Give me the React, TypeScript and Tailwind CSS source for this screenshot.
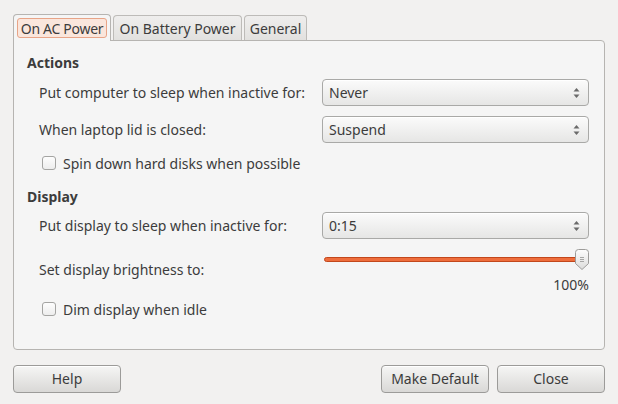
import { ReactNode } from "react";

const font = { fontFamily: '"Noto Sans", "Open Sans", sans-serif' };

function Combo({ value }: { value: string }) {
  return (
    <div className="flex h-[27px] w-[267px] items-center justify-between rounded-[4px] border border-[#a9a9a7] bg-gradient-to-b from-[#fbfbfb] to-[#e6e6e5] pl-[6px] pr-[8px] shadow-[inset_0_1px_0_#ffffff]">
      <span>{value}</span>
      <svg width="7" height="12" viewBox="0 0 7 12" className="text-[#6a6a6a]">
        <path d="M3.5 1 L6.5 4.5 L0.5 4.5 Z" fill="currentColor" />
        <path d="M3.5 11 L6.5 7.5 L0.5 7.5 Z" fill="currentColor" />
      </svg>
    </div>
  );
}

function Check({ label }: { label: string }) {
  return (
    <div className="flex h-[20px] items-center gap-[7px] pl-[3px]">
      <div className="h-[14px] w-[14px] rounded-[3px] border border-[#a4a4a2] bg-gradient-to-b from-[#fdfdfd] to-[#ededed]" />
      <span>{label}</span>
    </div>
  );
}

function Row({ label, children }: { label: string; children: ReactNode }) {
  return (
    <div className="grid grid-cols-[283px_267px] items-center">
      <span>{label}</span>
      {children}
    </div>
  );
}

function Button({ label, className = "" }: { label: string; className?: string }) {
  return (
    <button
      className={`flex h-[28px] w-[108px] items-center justify-center rounded-[4px] border border-[#9c9b99] bg-gradient-to-b from-[#f6f6f5] to-[#d9d8d6] pb-[2px] text-[#3c3c3c] shadow-[inset_0_1px_0_#ffffff] ${className}`}
    >
      {label}
    </button>
  );
}

export default function App() {
  return (
    <div
      style={font}
      className="flex h-[404px] w-[618px] flex-col bg-[#f2f1f0] px-[13px] pt-[14px] text-[14px] text-[#3c3c3c]"
    >
      {/* Tabs */}
      <div className="flex items-end gap-[2px]">
        <div className="relative z-10 -mb-px flex h-[27px] w-[98px] items-start rounded-t-[4px] border border-b-0 border-[#b6b4b1] bg-[#f5f5f5] px-[3px] pt-[3px]">
          <div className="flex h-[20px] w-full items-center justify-center rounded-[3px] border border-[#e8a487] bg-[#fae6dc] tracking-[-0.3px]">
            On AC Power
          </div>
        </div>
        <div className="flex h-[25px] w-[129px] items-center justify-center rounded-t-[4px] border border-b-0 border-[#bdbbb8] bg-gradient-to-b from-[#efeeed] to-[#e2e1df]">
          On Battery Power
        </div>
        <div className="flex h-[25px] w-[63px] items-center justify-center rounded-t-[4px] border border-b-0 border-[#bdbbb8] bg-gradient-to-b from-[#efeeed] to-[#e2e1df]">
          General
        </div>
      </div>

      {/* Panel */}
      <div className="flex h-[310px] flex-col rounded-b-[4px] rounded-tr-[4px] border border-[#b6b4b1] bg-[#f5f5f5] pl-[13px] pt-[11px]">
        <div className="flex h-[20px] items-center font-bold">Actions</div>
        <div className="mt-[7px] flex flex-col gap-[10px] pl-[12px]">
          <Row label="Put computer to sleep when inactive for:">
            <Combo value="Never" />
          </Row>
          <Row label="When laptop lid is closed:">
            <Combo value="Suspend" />
          </Row>
          <Check label="Spin down hard disks when possible" />
        </div>
        <div className="mt-[13px] flex h-[20px] items-center font-bold">Display</div>
        <div className="mt-[6px] flex flex-col pl-[12px]">
          <Row label="Put display to sleep when inactive for:">
            <Combo value="0:15" />
          </Row>
          <div className="mt-[9px] grid h-[44px] grid-cols-[283px_267px] items-center">
            <span className="pb-[4px]">Set display brightness to:</span>
            <div className="flex h-full flex-col">
              <div className="relative mt-[1px] h-[20px]">
                <div className="absolute left-[2px] right-[10px] top-[8px] h-[5px] rounded-full border border-[#c2471c] bg-[#ee6d3c]" />
                <svg
                  width="14"
                  height="21"
                  viewBox="0 0 14 21"
                  className="absolute right-[0px] top-0"
                >
                  <defs>
                    <linearGradient id="thumb" x1="0" y1="0" x2="0" y2="1">
                      <stop offset="0" stopColor="#fdfdfd" />
                      <stop offset="1" stopColor="#dcdcdb" />
                    </linearGradient>
                  </defs>
                  <path
                    d="M3.5 0.5 H10.5 Q13.5 0.5 13.5 3.5 V14.5 L7 20.5 L0.5 14.5 V3.5 Q0.5 0.5 3.5 0.5 Z"
                    fill="url(#thumb)"
                    stroke="#9d9c9a"
                  />
                  <path d="M5 8.5 H9 M5 10.5 H9 M5 12.5 H9" stroke="#a6a6a5" strokeWidth="1" />
                </svg>
              </div>
              <div className="mt-[5px] text-right">100%</div>
            </div>
          </div>
          <div className="mt-[7px]">
            <Check label="Dim display when idle" />
          </div>
        </div>
      </div>

      {/* Buttons */}
      <div className="mt-[15px] flex items-center">
        <Button label="Help" />
        <div className="flex-1" />
        <Button label="Make Default" />
        <Button label="Close" className="ml-[8px]" />
      </div>
    </div>
  );
}
